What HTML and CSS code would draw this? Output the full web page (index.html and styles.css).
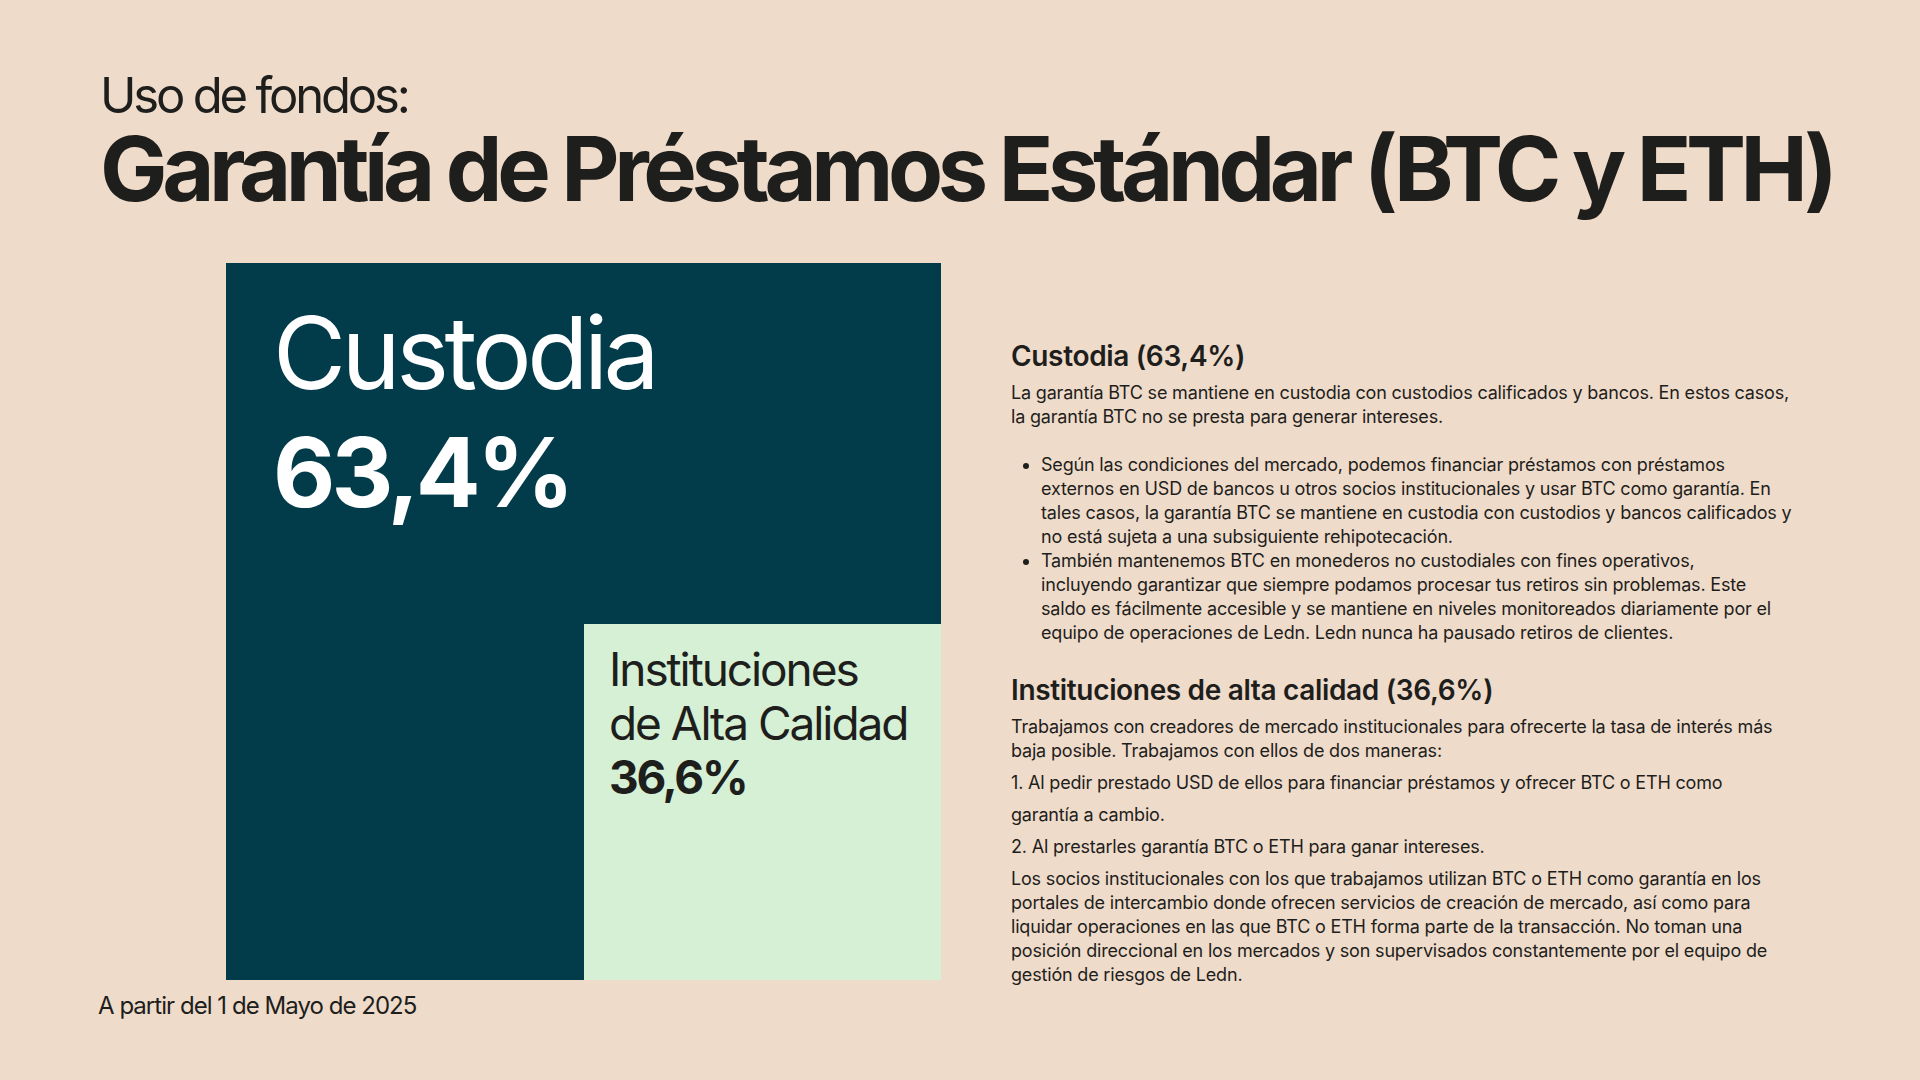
FILE: index.html
```html
<!DOCTYPE html>
<html lang="es">
<head>
<meta charset="utf-8">
<title>Uso de fondos: Garantía de Préstamos Estándar (BTC y ETH)</title>
<link rel="stylesheet" href="styles.css">
</head>
<body>
<div class="page">
  <header class="header">
    <div class="subtitle">Uso de fondos:</div>
    <h1 class="title">Garantía de Préstamos Estándar (BTC y ETH)</h1>
  </header>
  <main class="main">
    <div class="left">
      <div class="chart">
        <div class="custody">
          <div class="custody-label">Custodia</div>
          <div class="custody-value">63,4%</div>
        </div>
        <div class="inst">
          <div class="inst-label">Instituciones<br>de Alta Calidad</div>
          <div class="inst-value">36,6%</div>
        </div>
      </div>
      <div class="footer">A partir del 1 de Mayo de 2025</div>
    </div>
    <section class="details">
      <h2 class="sec-title">Custodia (63,4%)</h2>
      <p class="para">La garantía BTC se mantiene en custodia con custodios calificados y bancos. En estos casos, la garantía BTC no se presta para generar intereses.</p>
      <ul class="bullets">
        <li>Según las condiciones del mercado, podemos financiar préstamos con préstamos externos en USD de bancos u otros socios institucionales y usar BTC como garantía. En tales casos, la garantía BTC se mantiene en custodia con custodios y bancos calificados y no está sujeta a una subsiguiente rehipotecación.</li>
        <li>También mantenemos BTC en monederos no custodiales con fines operativos,<br>incluyendo garantizar que siempre podamos procesar tus retiros sin problemas. Este saldo es fácilmente accesible y se mantiene en niveles monitoreados diariamente por el equipo de operaciones de Ledn. Ledn nunca ha pausado retiros de clientes.</li>
      </ul>
      <h2 class="sec-title sec-title-2">Instituciones de alta calidad (36,6%)</h2>
      <p class="para">Trabajamos con creadores de mercado institucionales para ofrecerte la tasa de interés más baja posible. Trabajamos con ellos de dos maneras:</p>
      <p class="para gap">1. Al pedir prestado USD de ellos para financiar préstamos y ofrecer BTC o ETH como</p>
      <p class="para gap">garantía a cambio.</p>
      <p class="para gap">2. Al prestarles garantía BTC o ETH para ganar intereses.</p>
      <p class="para gap">Los socios institucionales con los que trabajamos utilizan BTC o ETH como garantía en los portales de intercambio donde ofrecen servicios de creación de mercado, así como para liquidar operaciones en las que BTC o ETH forma parte de la transacción. No toman una posición direccional en los mercados y son supervisados constantemente por el equipo de gestión de riesgos de Ledn.</p>
    </section>
  </main>
</div>
</body>
</html>
```

FILE: styles.css
```css
* { box-sizing: border-box; }
html, body {
  margin: 0;
  padding: 0;
  background: #efdbca;
}
body {
  font-family: Inter, "Liberation Sans", sans-serif;
  color: #1e1e1c;
  width: 1920px;
  height: 1080px;
  overflow: hidden;
}
.page {
  padding: 69px 0 0 100px;
}
.subtitle {
  font-size: 49px;
  line-height: 54px;
  font-weight: 400;
  letter-spacing: -0.065em;
}
.title {
  margin: 0;
  font-size: 90px;
  line-height: 92px;
  font-weight: 700;
  letter-spacing: -0.06em;
}
.main {
  display: flex;
  margin-top: 48px;
}
.left {
  margin-left: -2px;
  display: flex;
  flex-direction: column;
}
.chart {
  margin-left: 128px;
  width: 715px;
  height: 717px;
  background: #023c4a;
  display: flex;
  flex-direction: column;
}
.custody {
  padding: 40px 0 0 47px;
  color: #ffffff;
}
.custody-label {
  font-size: 100px;
  line-height: 100px;
  font-weight: 400;
  letter-spacing: -0.045em;
}
.custody-value {
  margin-top: 21px;
  font-size: 96px;
  line-height: 96px;
  font-weight: 700;
  letter-spacing: -0.04em;
}
.inst {
  margin-top: auto;
  align-self: flex-end;
  width: 357px;
  height: 356px;
  background: #d5f0d4;
  padding: 18px 0 0 25px;
  font-size: 46px;
  line-height: 54px;
  letter-spacing: -0.045em;
  color: #1e1e1c;
}
.inst-value {
  font-weight: 700;
  letter-spacing: -0.05em;
}
.footer {
  margin-top: 11px;
  font-size: 24px;
  line-height: 30px;
  letter-spacing: -0.04em;
}
.details {
  margin-left: 70px;
  width: 782px;
  padding-top: 76px;
}
.sec-title {
  margin: 0 0 8px;
  font-size: 28px;
  line-height: 34px;
  font-weight: 600;
  letter-spacing: -0.012em;
}
.sec-title-2 {
  margin-top: 28px;
}
.para {
  margin: 0;
  font-size: 18px;
  line-height: 24px;
  letter-spacing: -0.01em;
}
.para.gap {
  margin-top: 8px;
}
.bullets {
  margin: 24px 0 0;
  padding-left: 30px;
  font-size: 18px;
  line-height: 24px;
  letter-spacing: -0.01em;
}
```
